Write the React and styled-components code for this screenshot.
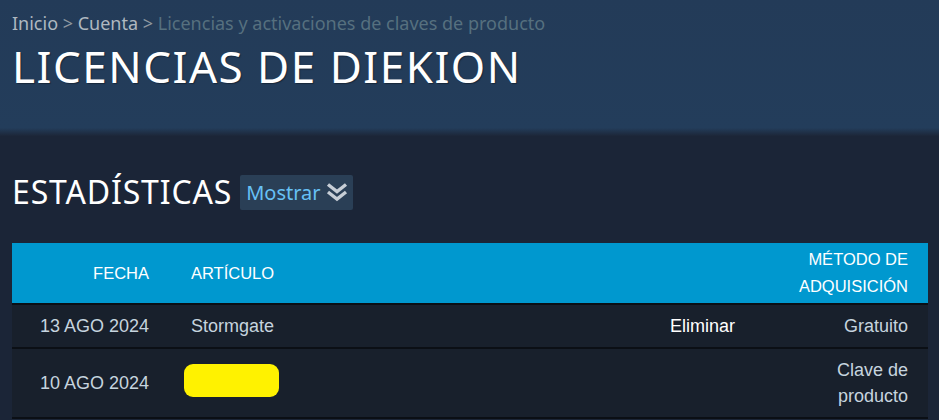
import styled, { createGlobalStyle } from "styled-components";

const GlobalStyle = createGlobalStyle`
  html, body {
    margin: 0;
    padding: 0;
    background: #1b2537;
  }
  body {
    font-family: "Noto Sans", "Liberation Sans", sans-serif;
  }
`

const Page = styled.div`
  width: 939px;
  min-height: 420px;
  background: #1b2537;
  overflow: hidden;
`

const Header = styled.header`
  background: linear-gradient(to bottom, #233b58 0%, #233d5b 94%, #1c2638 100%);
  height: 136px;
  padding: 9px 12px 0;
  box-sizing: border-box;
`

const Breadcrumbs = styled.div`
  font-size: 18px;
  line-height: 28px;
  color: #8f98a0;
  white-space: nowrap;
  a {
    color: #afb8c0;
    text-decoration: none;
  }
  span.current {
    color: #56707f;
  }
`

const Title = styled.h1`
  margin: 1px 0 0;
  font-size: 44px;
  font-weight: 400;
  letter-spacing: 1.5px;
  line-height: 56px;
  color: #fff;
  text-transform: uppercase;
  text-shadow: 1px 1px 1px rgba(0, 0, 0, 0.35);
`

const Content = styled.main`
  padding: 36px 11px 0 12px;
`

const SectionHead = styled.div`
  display: flex;
  align-items: center;
  gap: 8px;
  margin-bottom: 31px;
`

const SectionTitle = styled.h2`
  margin: 0;
  font-size: 32px;
  font-weight: 400;
  line-height: 40px;
  color: #fff;
  letter-spacing: 0.85px;
`

const ToggleButton = styled.button`
  display: flex;
  align-items: center;
  gap: 4px;
  height: 35px;
  padding: 0 4px 0 6px;
  border: none;
  border-radius: 2px;
  background: #2a3f56;
  color: #67c1f5;
  font-family: inherit;
  font-size: 20px;
  cursor: pointer;
  svg {
    width: 24px;
    height: 24px;
  }
`

const Table = styled.div`
  font-family: "Liberation Sans", Arial, sans-serif;
  width: 916px;
`

const Row = styled.div`
  display: grid;
  grid-template-columns: 169px 1fr 120px 148px;
  align-items: center;
  background: ${p => (p.$head ? "#0098cf" : "#18202c")};
  color: ${p => (p.$head ? "#fff" : "#c6d4df")};
  font-size: ${p => (p.$head ? "16.5px" : "18px")};
  line-height: ${p => (p.$head ? "27px" : "26px")};
  text-transform: ${p => (p.$head ? "uppercase" : "none")};
  padding: ${p => (p.$head ? "3px 0" : "8px 0")};
  border-bottom: 2px solid #0b0f15;
`

const Cell = styled.div`
  padding: 0 10px;
  text-align: ${p => p.$align || "left"};
  ${p => p.$date && "padding-right: 32px;"}
  ${p => p.$method && "padding-right: 20px;"}
`

const RemoveLink = styled.a`
  color: #fff;
  text-decoration: none;
  cursor: pointer;
`

const Redacted = styled.span`
  display: inline-block;
  vertical-align: middle;
  width: 95px;
  height: 33px;
  margin: -5px 0 0 -7px;
  border-radius: 9px;
  background: #fff200;
`

function DoubleChevron() {
  return (
    <svg viewBox="0 0 24 24" fill="none" stroke="#c7ced6" strokeWidth="3.4" strokeLinecap="butt" strokeLinejoin="miter">
      <polyline points="3,4.5 12,11.5 21,4.5" />
      <polyline points="3,12 12,19 21,12" />
    </svg>
  )
}

const licenses = [
  { date: "13 AGO 2024", name: "Stormgate", removable: true, method: "Gratuito" },
  { date: "10 AGO 2024", name: null, removable: false, method: "Clave de producto" },
]

export default function App() {
  return (
    <Page>
      <GlobalStyle />
      <Header>
        <Breadcrumbs>
          <a href="#">Inicio</a> &gt; <a href="#">Cuenta</a> &gt;{" "}
          <span className="current">Licencias y activaciones de claves de producto</span>
        </Breadcrumbs>
        <Title>Licencias de Diekion</Title>
      </Header>
      <Content>
        <SectionHead>
          <SectionTitle>ESTADÍSTICAS</SectionTitle>
          <ToggleButton>
            Mostrar
            <DoubleChevron />
          </ToggleButton>
        </SectionHead>
        <Table>
          <Row $head>
            <Cell $align="right" $date>Fecha</Cell>
            <Cell>Artículo</Cell>
            <Cell />
            <Cell $align="right" $method>Método de adquisición</Cell>
          </Row>
          {licenses.map(l => (
            <Row key={l.date}>
              <Cell $align="right" $date>{l.date}</Cell>
              <Cell>{l.name ? l.name : <Redacted />}</Cell>
              <Cell>{l.removable && <RemoveLink>Eliminar</RemoveLink>}</Cell>
              <Cell $align="right" $method>{l.method}</Cell>
            </Row>
          ))}
        </Table>
      </Content>
    </Page>
  )
}
